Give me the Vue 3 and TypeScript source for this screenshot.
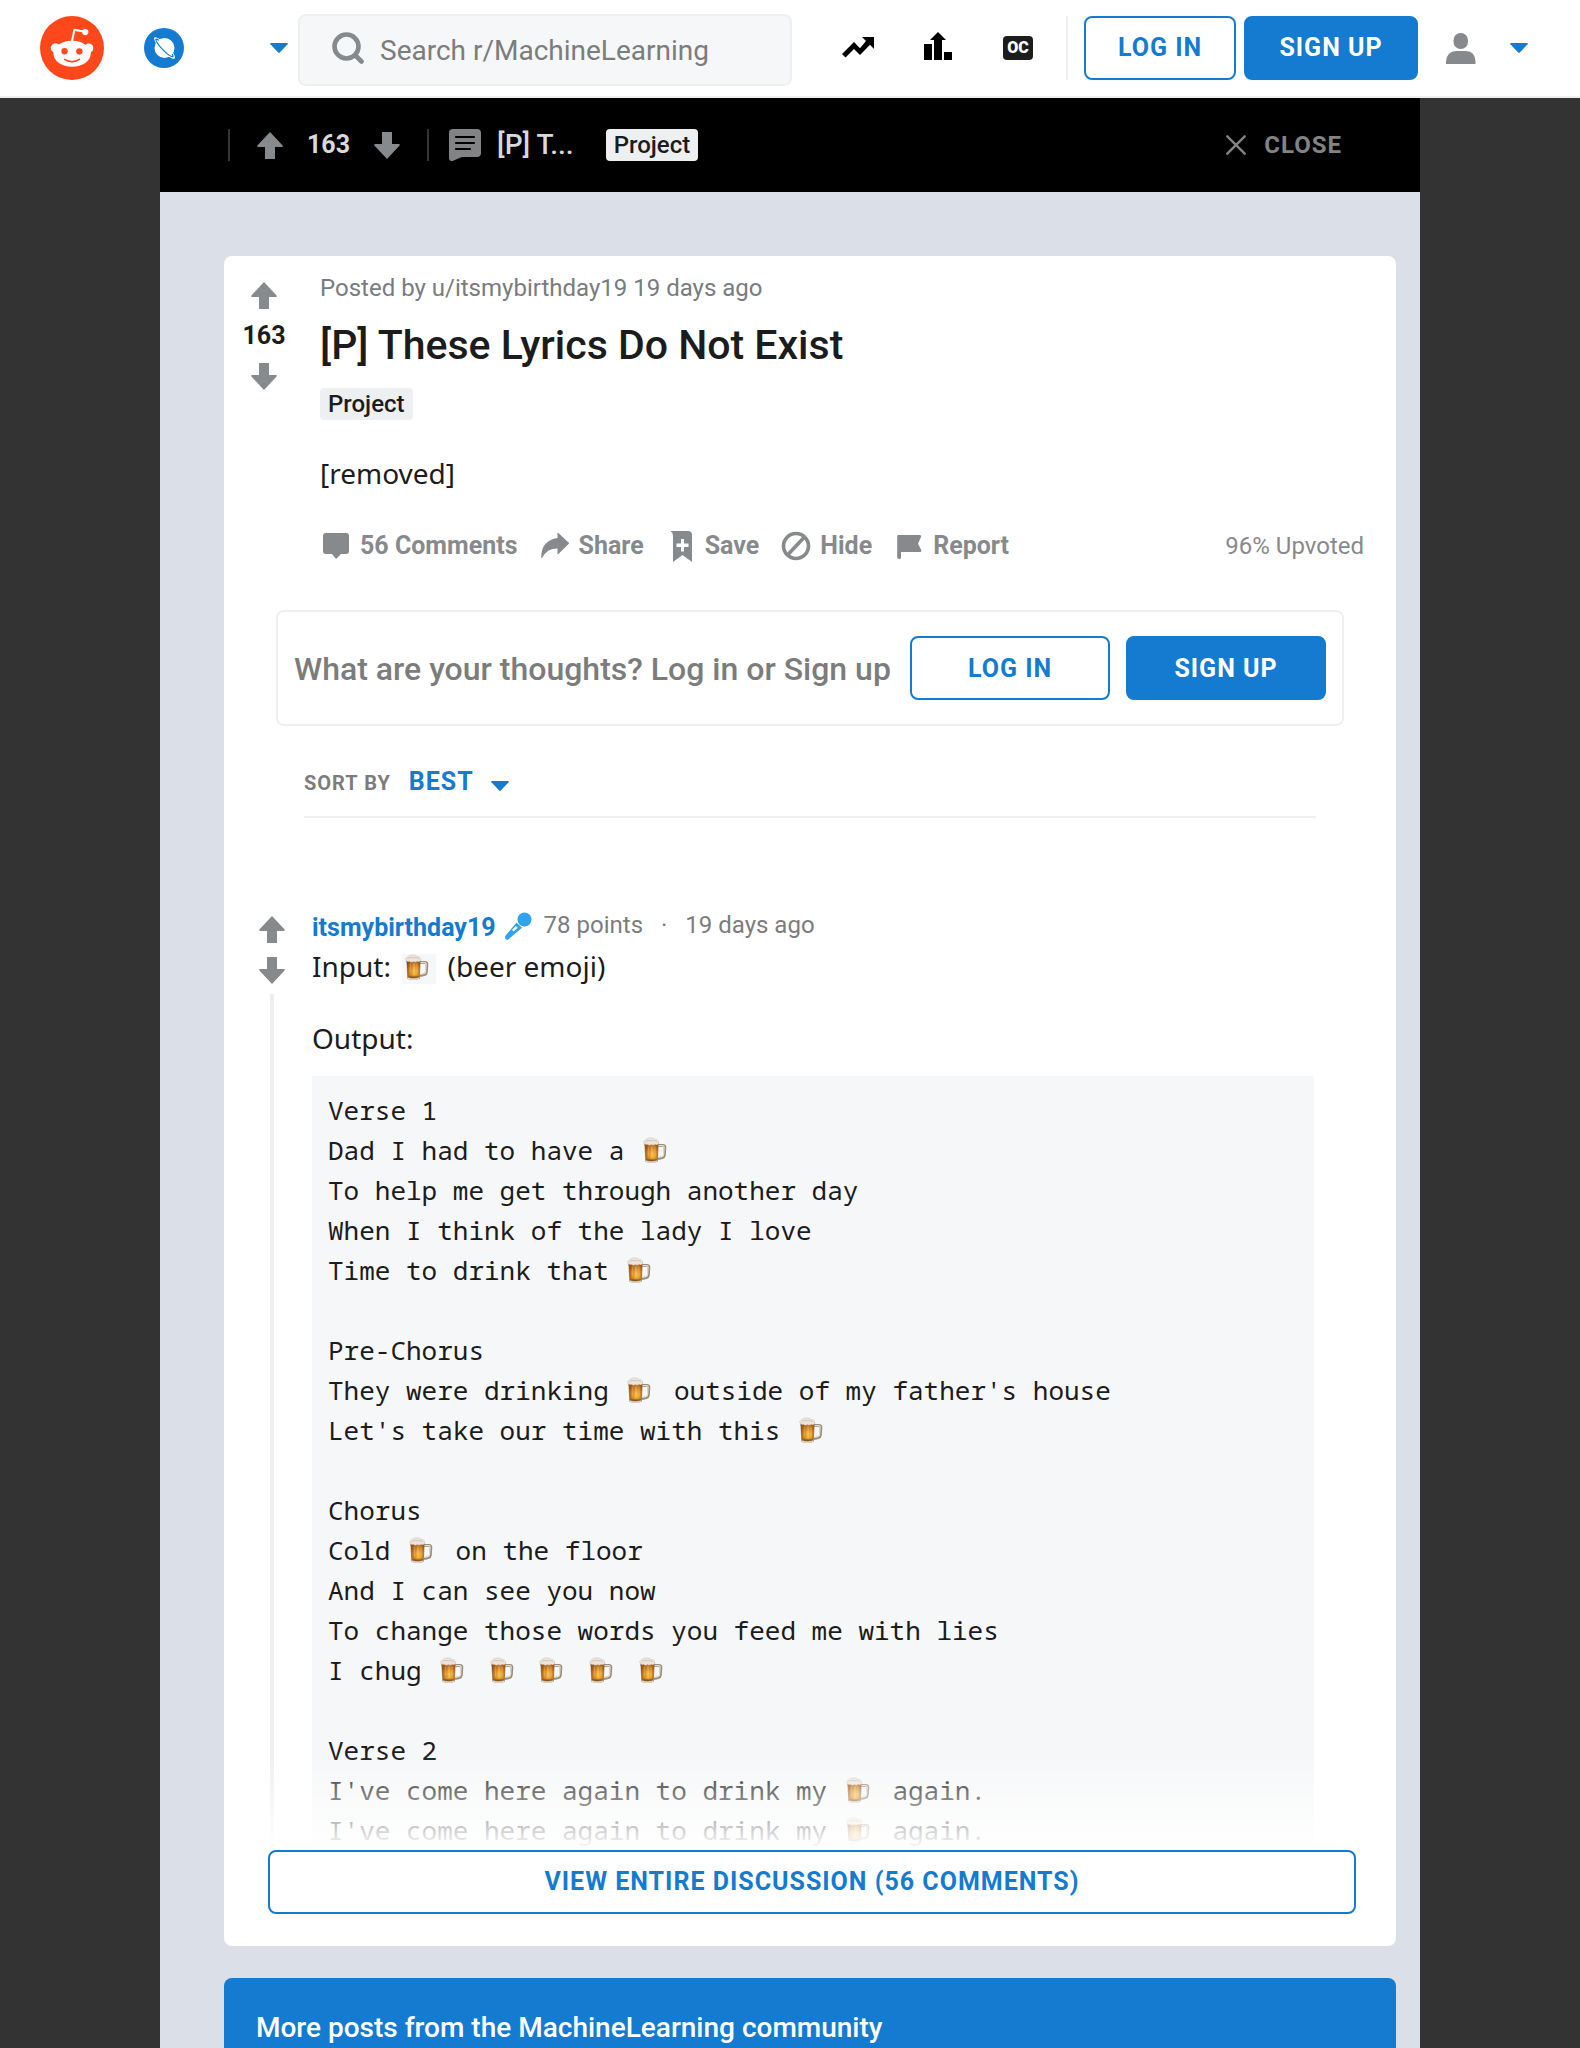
<script setup lang="ts">
import { ref } from 'vue'

const community = 'r/MachineLearning'
const score = 163
const commentCount = 56
const sort = ref('BEST')

interface Action {
  label: string
  icon: string
}

const actions: Action[] = [
  { label: `${commentCount} Comments`, icon: 'i-comment' },
  { label: 'Share', icon: 'i-share' },
  { label: 'Save', icon: 'i-save' },
  { label: 'Hide', icon: 'i-hide' },
  { label: 'Report', icon: 'i-report' },
]

// Each "*" stands for a beer mug drawn inline with the text.
const lyrics: string[] = [
  'Verse 1',
  'Dad I had to have a *',
  'To help me get through another day',
  'When I think of the lady I love',
  'Time to drink that *',
  '',
  'Pre-Chorus',
  "They were drinking * outside of my father's house",
  "Let's take our time with this *",
  '',
  'Chorus',
  'Cold * on the floor',
  'And I can see you now',
  'To change those words you feed me with lies',
  'I chug * * * * *',
  '',
  'Verse 2',
  "I've come here again to drink my * again.",
  "I've come here again to drink my * again.",
]
</script>

<template>
  <div class="page">
    <svg class="sprite" aria-hidden="true">
      <defs>
        <linearGradient id="beer" x1="0" y1="0" x2="1" y2="0">
          <stop offset="0" stop-color="#6e3612" />
          <stop offset=".25" stop-color="#c06f22" />
          <stop offset=".55" stop-color="#fbb840" />
          <stop offset=".8" stop-color="#d08830" />
          <stop offset="1" stop-color="#8a4a1a" />
        </linearGradient>
        <linearGradient id="beer-shade" x1="0" y1="0" x2="0" y2="1">
          <stop offset="0" stop-color="#8a4410" stop-opacity=".75" />
          <stop offset=".3" stop-color="#b4651c" stop-opacity=".45" />
          <stop offset=".6" stop-color="#ffc64a" stop-opacity=".3" />
          <stop offset=".82" stop-color="#ffb52a" stop-opacity=".3" />
          <stop offset="1" stop-color="#4e2206" stop-opacity=".95" />
        </linearGradient>
        <symbol id="i-mug" viewBox="0 0 34 30">
          <path d="M17.500 8.500h5.500q2 0 1.900 2l-.5 7.500q-.2 2-2.200 2.600l-4.200 1" fill="none" stroke="#9a8d7c" stroke-width="2.800" />
          <path d="M18 8.700h4.700q1.500 0 1.400 1.600l-.5 7.300q-.1 1.500-1.700 2l-3.600.9" fill="none" stroke="#e6e0d6" stroke-width="1.200" />
          <path d="M4.300 5.500h14.400l-.9 19.200q-6.200 2.400-12.400 0z" fill="#a58b6b" />
          <path d="M4.800 6.500h13.400l-.9 16.300q-5.600 1.800-11.400 0z" fill="url(#beer)" />
          <path d="M4.800 6.500h13.400l-.9 16.300q-5.600 1.800-11.400 0z" fill="url(#beer-shade)" />
          <path d="M8.300 9.500v10M12 9.500v10M15 9.500v10" stroke="#ffe08a" stroke-opacity=".4" stroke-width=".9" />
          <path d="M5.800 23.800q5.600 1.600 11.500 0l-.1 1.200q-5.600 1.800-11.300 0z" fill="#e2d9cb" />
          <path d="M4 6.300q-1.300-2 .9-3Q7 .8 10 .9q3.500-.5 5 1.400 4 .2 3.900 4.200-1.500 1.800-3.400.8-2.200 1.300-4.300.3-2 1.200-3.800-.3-2 .7-3.400-1z" fill="#ece4dc" stroke="#cfc3b6" stroke-width=".5" />
          <path d="M5.500 4.500q3-1.800 6-.8 3.500-.6 5.500 1" fill="none" stroke="#cbbeb1" stroke-width=".8" />
        </symbol>
        <symbol id="i-up" viewBox="0 0 26 27">
          <path d="M13 0 25.600 13.400q.8 1.600-.9 1.600H18v12H8V15H1.300q-1.700 0-.9-1.600z" />
        </symbol>
        <symbol id="i-down" viewBox="0 0 26 27">
          <path d="M13 27 .4 13.600q-.8-1.600.9-1.600H8V0h10v12h6.700q1.700 0 .9 1.600z" />
        </symbol>
        <symbol id="i-caret" viewBox="0 0 18 10">
          <path d="M1 0h16q1.500 0 .6 1.200L9.800 9.500q-.8.800-1.600 0L.4 1.200Q-.5 0 1 0z" />
        </symbol>
        <symbol id="i-comment" viewBox="0 0 32 32">
          <path d="M6 3h20q3 0 3 3v15q0 3-3 3h-5l-5 5-4-5H6q-3 0-3-3V6q0-3 3-3z" />
        </symbol>
        <symbol id="i-share" viewBox="0 0 32 32">
          <path d="M18.500 3q.3-.6.900-.1l10.400 9.900q.5.500 0 1L19.400 24q-.8.500-.9-.3v-5.200Q8 18.300 3.400 27.600q-.8 1.300-1.200-.2Q2.200 10.500 18.500 8z" />
        </symbol>
        <symbol id="i-save" viewBox="0 0 32 32">
          <path fill-rule="evenodd" d="M5.500 1H23q4 0 4 4v27l-9.500-7L8 32V6Q8 2.500 5.500 1zM16 9v4.500h-4.500v3.500H16v4.500h3V17h4.500v-3.500H19V9z" />
        </symbol>
        <symbol id="i-hide" viewBox="0 0 32 32">
          <circle cx="16" cy="16" r="12.500" fill="none" stroke="currentColor" stroke-width="3.600" />
          <path d="M24 7.500 8 24.500" stroke="currentColor" stroke-width="3.600" />
        </symbol>
        <symbol id="i-report" viewBox="0 0 32 32">
          <path d="M5.200 5h21.600q2 0 1.300 1.700l-3.100 7 3.300 6.500q.8 1.800-1.200 1.800H8v5.700q0 1.300-1.400 1.300T4.200 27.700V6q0-1 1-1z" />
        </symbol>
      </defs>
    </svg>

    <header class="top">
      <a class="logo" href="#" aria-label="Home">
        <svg viewBox="0 0 20 20" width="64" height="64">
          <circle cx="10" cy="10" r="10" fill="#ff471c" />
          <path fill="#fff" d="M16.670,10A1.460,1.460,0,0,0,14.200,9a7.120,7.120,0,0,0-3.850-1.230L11,4.650,13.140,5.100a1,1,0,1,0,.13-0.610L10.820,4a0.310,0.310,0,0,0-.37.240L9.710,7.710a7.140,7.140,0,0,0-3.900,1.230A1.460,1.460,0,1,0,4.200,11.330a2.870,2.870,0,0,0,0,.44c0,2.240,2.610,4.060,5.830,4.060s5.830-1.820,5.830-4.060a2.870,2.870,0,0,0,0-.44A1.460,1.460,0,0,0,16.670,10Zm-10,1a1,1,0,1,1,1,1A1,1,0,0,1,6.670,11Zm5.810,2.750a3.840,3.840,0,0,1-2.470.77,3.840,3.840,0,0,1-2.470-.77,0.270,0.270,0,0,1,.38-0.380A3.270,3.270,0,0,0,10,14a3.280,3.280,0,0,0,2.090-.61A0.270,0.270,0,1,1,12.480,13.790Zm-0.180-1.710a1,1,0,1,1,1-1A1,1,0,0,1,12.290,12.080Z" />
        </svg>
      </a>
      <button class="community" type="button" aria-label="Choose community">
        <svg viewBox="0 0 40 40" width="40" height="40">
          <circle cx="20" cy="20" r="20" fill="#147bd1" />
          <circle cx="20.500" cy="20" r="10" fill="#fff" />
          <g transform="rotate(46 20.500 20)">
            <ellipse cx="20.500" cy="20" rx="14.500" ry="3.600" fill="#fff" />
            <path d="M10.500 18.900q-2.600.5-2.300 1.300Q11 22.400 20.500 22.400t12-2.200q.3-.8-2-1.300" fill="none" stroke="#147bd1" stroke-width="1.200" stroke-linecap="round" />
          </g>
        </svg>
        <svg class="caret" width="18" height="10"><use href="#i-caret" /></svg>
      </button>
      <form class="search" role="search" @submit.prevent>
        <svg width="32" height="32" viewBox="0 0 32 32" fill="none" stroke="#878a8c" stroke-linecap="round" aria-hidden="true">
          <circle cx="14.500" cy="14.500" r="12" stroke-width="4.600" />
          <path d="m24 24 5.500 5.500" stroke-width="4.600" />
        </svg>
        <input type="search" :placeholder="`Search ${community}`" :aria-label="`Search ${community}`" />
      </form>
      <nav class="shortcuts">
        <a href="#" aria-label="Popular">
          <svg width="32" height="32" viewBox="0 0 32 32">
            <path d="M20 5h12v12l-4-4.200L18 23l-6-6-8.500 8.500L0 22 12 10l6 6.200 6-7.200z" />
          </svg>
        </a>
        <a href="#" aria-label="All">
          <svg width="32" height="32" viewBox="0 0 32 32">
            <path d="M2 12h8v16H2zM22 20h8v8h-8zM16 0l8 8h-4v20h-8V8H8z" />
          </svg>
        </a>
        <a href="#" aria-label="Original content"><span class="oc">OC</span></a>
      </nav>
      <span class="divider"></span>
      <button class="btn outline head-login" type="button">LOG IN</button>
      <button class="btn solid head-signup" type="button">SIGN UP</button>
      <button class="user" type="button" aria-label="User menu">
        <svg width="30" height="32" viewBox="0 0 30 32" fill="#878a8c">
          <rect x="7.500" y="1" width="14.500" height="16" rx="7.200" />
          <path d="M0 32v-2.500Q1 19 10 19h10q9 0 9.500 10.500V32z" />
        </svg>
        <svg class="caret" width="18" height="10"><use href="#i-caret" /></svg>
      </button>
    </header>

    <div class="backdrop">
      <div class="overlay">
        <div class="bar">
          <span class="rule"></span>
          <div class="bar-vote">
            <button class="arrow" type="button" aria-label="Upvote"><svg width="26" height="27"><use href="#i-up" /></svg></button>
            <strong>{{ score }}</strong>
            <button class="arrow" type="button" aria-label="Downvote"><svg width="26" height="27"><use href="#i-down" /></svg></button>
          </div>
          <span class="rule"></span>
          <svg class="bar-icon" width="32" height="32" viewBox="0 0 32 32" aria-hidden="true">
            <path d="M4 0h24q4 0 4 4v20q0 4-4 4H13l-9.500 4Q0 32.500 0 29V4q0-4 4-4z" fill="#818384" />
            <path d="M7 8h18M7 14h18M7 20h14" stroke="#000" stroke-width="2.200" stroke-linecap="round" />
          </svg>
          <span class="bar-title">[P] T...</span>
          <span class="tag">Project</span>
          <button class="close" type="button">
            <svg width="20" height="20" viewBox="0 0 20 20" fill="none" stroke="currentColor" stroke-width="2.400" stroke-linecap="round" aria-hidden="true">
              <path d="m1.300 1.300 17.400 17.400M18.700 1.300 1.300 18.700" />
            </svg>
            CLOSE
          </button>
        </div>

        <main class="column">
          <article class="card">
            <div class="post">
              <div class="votes">
                <button class="arrow" type="button" aria-label="Upvote"><svg width="26" height="27"><use href="#i-up" /></svg></button>
                <strong>{{ score }}</strong>
                <button class="arrow" type="button" aria-label="Downvote"><svg width="26" height="27"><use href="#i-down" /></svg></button>
              </div>
              <div class="post-main">
                <p class="byline">Posted by <a href="#">u/itsmybirthday19</a> 19 days ago</p>
                <h1>[P] These Lyrics Do Not Exist</h1>
                <span class="tag">Project</span>
                <p class="body">[removed]</p>
                <div class="actions">
                  <button v-for="a in actions" :key="a.label" type="button">
                    <svg width="32" height="32" aria-hidden="true"><use :href="`#${a.icon}`" /></svg>
                    {{ a.label }}
                  </button>
                  <span class="ratio">96% Upvoted</span>
                </div>
              </div>
            </div>

            <div class="reply">
              <p>What are your thoughts? Log in or Sign up</p>
              <button class="btn outline" type="button">LOG IN</button>
              <button class="btn solid" type="button">SIGN UP</button>
            </div>

            <div class="sort">
              <label for="sort">SORT BY</label>
              <div class="select">
                <select id="sort" v-model="sort">
                  <option>BEST</option>
                  <option>TOP</option>
                  <option>NEW</option>
                </select>
                <svg class="caret" width="18" height="10" aria-hidden="true"><use href="#i-caret" /></svg>
              </div>
            </div>

            <section class="comments">
              <div class="thread">
                <button class="arrow" type="button" aria-label="Upvote"><svg width="26" height="27"><use href="#i-up" /></svg></button>
                <button class="arrow" type="button" aria-label="Downvote"><svg width="26" height="27"><use href="#i-down" /></svg></button>
                <span class="line"></span>
              </div>
              <div class="comment">
                <div class="meta">
                  <a href="#">itsmybirthday19</a>
                  <svg width="28" height="28" viewBox="0 0 28 28" aria-hidden="true">
                    <circle cx="20.500" cy="7.500" r="7" fill="#2fa3ee" />
                    <path fill="#2fa3ee" fill-rule="evenodd" d="m12.500 10.500 5.500 5.300L4.500 27.200q-2 1.200-3-.2t0-3.200zM11.800 14 8 18l1.600 1.600 4.100-3.800z" />
                  </svg>
                  <span>78 points</span>
                  <span class="dot">·</span>
                  <span>19 days ago</span>
                </div>
                <p>
                  Input:
                  <svg class="mug chip" width="34" height="30" role="img" aria-label="beer"><use href="#i-mug" /></svg>
                  (beer emoji)
                </p>
                <p>Output:</p>
                <code>
                  <span v-for="(line, n) in lyrics" :key="n" class="row">
                    <template v-for="(part, i) in line.split('*')" :key="i">
                      <svg v-if="i > 0" class="mug" width="34" height="30" role="img" aria-label="beer"><use href="#i-mug" /></svg>
                      <span>{{ part }}</span>
                    </template>
                  </span>
                </code>
              </div>
            </section>

            <button class="btn outline view-all" type="button">VIEW ENTIRE DISCUSSION ({{ commentCount }} COMMENTS)</button>
          </article>

          <section class="more">
            <h2>More posts from the MachineLearning community</h2>
          </section>
        </main>
      </div>
    </div>
  </div>
</template>

<style>
body {
  margin: 0;
}
</style>

<style scoped>
.page {
  --blue: #147bd1;
  --grey: #878a8c;
  --line: #edeff1;
  --ink: #1c1c1c;
  display: flex;
  flex-direction: column;
  height: 100vh;
  font: 24px/32px Roboto, "Liberation Sans", sans-serif;
  color: var(--ink);
}
* {
  box-sizing: border-box;
}
svg {
  display: block;
  flex: none;
}
p,
h1,
h2 {
  margin: 0;
}
a {
  color: inherit;
  text-decoration: none;
}
button {
  padding: 0;
  border: 0;
  background: none;
  font: inherit;
  color: inherit;
  cursor: pointer;
}
strong {
  font-size: 25px;
}
.sprite {
  position: absolute;
  width: 0;
  height: 0;
}
.caret {
  fill: var(--blue);
}
.arrow {
  fill: var(--grey);
}

.top {
  display: flex;
  flex: none;
  align-items: center;
  height: 98px;
  padding: 0 52px 0 40px;
  border-bottom: 2px solid var(--line);
  background: #fff;
}
.community {
  display: flex;
  flex: none;
  align-items: center;
  justify-content: space-between;
  width: 144px;
  margin: 0 10px 0 40px;
}
.search {
  display: flex;
  flex: 1;
  align-items: center;
  gap: 16px;
  min-width: 0;
  height: 72px;
  margin-top: 4px;
  padding: 0 32px;
  border: 2px solid var(--line);
  border-radius: 8px;
  background: #f6f7f8;
}
.search svg {
  margin-bottom: 4px;
}
.search input {
  flex: 1;
  min-width: 0;
  height: 40px;
  padding: 0;
  border: 0;
  outline: 0;
  background: none;
  font: inherit;
  font-size: 28px;
  color: var(--ink);
}
.search input::placeholder {
  color: #7c7c7c;
  opacity: 1;
}
.shortcuts {
  display: flex;
  margin-left: 26px;
}
.shortcuts a {
  display: grid;
  place-items: center;
  width: 80px;
  height: 64px;
}
.oc {
  width: 30px;
  border-radius: 4px;
  background: var(--ink);
  color: #fff;
  font-size: 16px;
  font-weight: 900;
  line-height: 24px;
  text-align: center;
}
.divider {
  width: 2px;
  height: 64px;
  margin: 0 16px 0 8px;
  background: var(--line);
}
.btn {
  height: 64px;
  border: 2px solid var(--blue);
  border-radius: 8px;
  font-size: 25px;
  font-weight: 700;
  letter-spacing: 1px;
  text-align: center;
}
.outline {
  background: #fff;
  color: var(--blue);
}
.solid {
  background: var(--blue);
  color: #fff;
}
.head-login {
  width: 152px;
  margin-right: 8px;
}
.head-signup {
  width: 174px;
}
.user {
  display: flex;
  align-items: center;
  gap: 34px;
  margin-left: 28px;
}

.backdrop {
  flex: 1;
  min-height: 0;
  padding: 0 160px;
  overflow-y: auto;
  scrollbar-width: none;
  background: #333;
}
.overlay {
  min-height: 100%;
  background: #dbdfe8;
}
.bar {
  display: flex;
  align-items: center;
  height: 94px;
  padding: 0 78px 0 68px;
  background: #000;
  color: #d7dadc;
}
.rule {
  width: 2px;
  height: 32px;
  background: #343536;
}
.bar-vote {
  display: flex;
  align-items: center;
  gap: 24px;
  margin: 0 27px;
}
.bar-icon {
  margin: 0 16px 0 20px;
}
.bar-title {
  font-size: 28px;
  font-weight: 500;
}
.bar .tag {
  margin-left: 32px;
}
.tag {
  display: inline-block;
  padding: 0 8px;
  border-radius: 4px;
  background: var(--line);
  color: var(--ink);
  font-weight: 500;
}
.close {
  display: flex;
  align-items: center;
  gap: 18px;
  margin-left: auto;
  color: #818384;
  font-weight: 700;
  letter-spacing: 1px;
}

.column {
  padding: 64px 24px 0 64px;
}
.card {
  padding-bottom: 32px;
  border-radius: 8px;
  background: #fff;
}
.post {
  display: flex;
}
.votes {
  display: flex;
  flex: none;
  flex-direction: column;
  align-items: center;
  gap: 11px;
  width: 80px;
  padding-top: 26px;
}
.post-main {
  flex: 1;
  min-width: 0;
  padding: 16px 32px 0 16px;
}
.byline {
  color: #787c7e;
}
h1 {
  margin: 16px 0 18px;
  font-size: 41px;
  font-weight: 500;
  line-height: 50px;
}
.post-main .tag {
  display: block;
  width: fit-content;
}
.body {
  margin: 32px 0 36px;
  font-family: "Noto Sans", sans-serif;
  font-size: 28px;
  line-height: 42px;
}
.actions {
  display: flex;
  align-items: center;
  gap: 21px;
  color: var(--grey);
}
.actions button {
  display: flex;
  align-items: center;
  gap: 8px;
  fill: currentColor;
  font-size: 25px;
  font-weight: 700;
}
.ratio {
  margin-left: auto;
}
.reply {
  display: flex;
  align-items: center;
  gap: 16px;
  margin: 48px 52px 40px;
  padding: 24px 16px;
  border: 2px solid var(--line);
  border-radius: 8px;
}
.reply p {
  flex: 1;
  margin-right: -8px;
  padding-top: 2px;
  color: #7c7c7c;
  font-size: 32px;
  font-weight: 500;
  white-space: nowrap;
}
.reply .btn {
  width: 200px;
  padding-top: 2px;
}
.sort {
  display: flex;
  align-items: baseline;
  gap: 18px;
  margin: 0 80px;
  padding-bottom: 18px;
  border-bottom: 2px solid var(--line);
}
.sort label {
  color: #7c7c7c;
  font-size: 20px;
  font-weight: 700;
  letter-spacing: 1px;
  line-height: 24px;
}
.select {
  position: relative;
}
.select select {
  display: block;
  width: 100px;
  height: 32px;
  padding: 0;
  border: 0;
  appearance: none;
  background: none;
  color: var(--blue);
  font: inherit;
  font-size: 25px;
  font-weight: 700;
  letter-spacing: 1px;
}
.select .caret {
  position: absolute;
  top: 15px;
  right: 0;
  pointer-events: none;
}

.comments {
  position: relative;
  display: flex;
  gap: 27px;
  max-height: 938px;
  margin-top: 94px;
  padding: 0 82px 0 35px;
  overflow: hidden;
}
.comments::after {
  content: "";
  position: absolute;
  inset: auto 0 0;
  height: 96px;
  background: linear-gradient(rgba(255, 255, 255, 0), #fff);
}
.thread {
  display: flex;
  flex: none;
  flex-direction: column;
  align-items: center;
  gap: 14px;
  padding-top: 4px;
}
.line {
  flex: 1;
  width: 4px;
  margin-top: -4px;
  background: var(--line);
}
.comment {
  flex: 1;
  min-width: 0;
}
.meta {
  display: flex;
  gap: 8px;
  color: #7c7c7c;
}
.meta a {
  color: var(--blue);
  font-size: 25px;
  font-weight: 700;
}
.meta span {
  margin-left: 4px;
  line-height: 26px;
}
.meta .dot {
  margin: 0 6px 0 10px;
}
.comment p {
  margin-bottom: 28px;
  font-family: "Noto Sans", sans-serif;
  font-size: 28px;
  line-height: 44px;
}
.comment p + p {
  margin-bottom: 16px;
}
.mug {
  display: inline-block;
  vertical-align: -7px;
}
.chip {
  margin: 0 4px;
  background: #f6f7f8;
}
code {
  display: block;
  padding: 14px 16px;
  background: #f6f7f8;
  font-family: "Noto Sans Mono", "DejaVu Sans Mono", monospace;
  font-size: 26px;
  line-height: 40px;
  white-space: pre;
}
.row {
  display: block;
  height: 40px;
}
.view-all {
  display: block;
  width: calc(100% - 84px);
  margin: 0 40px 0 44px;
}
.more {
  margin-top: 32px;
  padding: 32px;
  border-radius: 8px 8px 0 0;
  background: var(--blue);
  color: #fff;
}
h2 {
  font-size: 28px;
  font-weight: 500;
  line-height: 36px;
}
</style>
